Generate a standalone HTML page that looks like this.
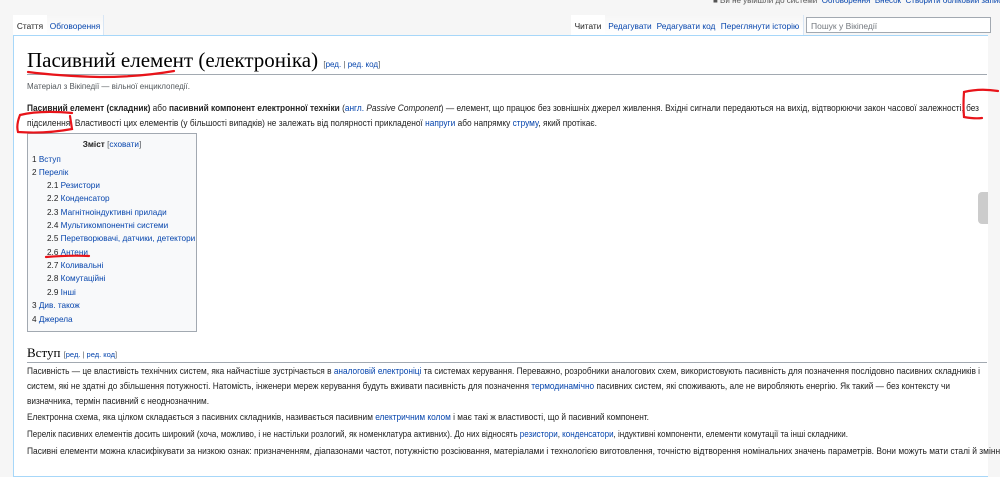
<!DOCTYPE html>
<html><head><meta charset="utf-8"><style>
body{margin:0;width:1000px;height:461px;overflow:hidden;background:#f6f6f6;font-family:"Liberation Sans",sans-serif;position:relative}
a{color:#0645ad;text-decoration:none}
.abs{position:absolute;white-space:nowrap}
#content{position:absolute;left:13px;top:35px;width:974px;height:440px;background:#fff;border:1px solid #a7d7f9;border-right:none}
.tab{position:absolute;top:15px;height:20px;font-size:8.3px;line-height:22px;text-align:center;background:linear-gradient(#f6f6f6,#fff);border-right:1px solid #d8e6f5;overflow:hidden}
.toc{position:absolute;left:27px;top:133px;width:168px;height:197px;border:1px solid #a2a9b1;background:#f8f9fa;font-size:8.2px}
.toc div{position:absolute;white-space:nowrap;color:#222}
svg text{font-family:"Liberation Sans",sans-serif;font-size:9px;fill:#222}
.l{fill:#0645ad}
</style></head><body>
<div class="abs" style="left:713px;top:-4px;font-size:8px;color:#0645ad"><span style="color:#555">&#9632; Ви не увійшли до системи</span> &nbsp;Обговорення &nbsp;Внесок &nbsp;Створити обліковий запис &nbsp;Ув</div>
<div id="content"></div>
<div class="tab" style="left:13px;width:34px;background:#fff;color:#222">Стаття</div>
<div class="tab" style="left:47px;width:56px;color:#0645ad">Обговорення</div>
<div class="tab" style="left:571px;width:34px;background:#fff;color:#222">Читати</div>
<div class="tab" style="left:605px;width:50px;color:#0645ad">Редагувати</div>
<div class="tab" style="left:655px;width:62px;color:#0645ad">Редагувати код</div>
<div class="tab" style="left:717px;width:86px;color:#0645ad">Переглянути історію</div>
<div class="abs" style="left:806px;top:17px;width:185px;height:16px;border:1px solid #a2a9b1;background:#fff;font-size:8.5px;line-height:16px;color:#72777d;padding-left:4px;box-sizing:border-box">Пошук у Вікіпедії</div>
<div class="abs" style="left:27px;top:48px;font-family:'Liberation Serif',serif;font-size:21px;color:#000">Пасивний елемент (електроніка) <span style="font-family:'Liberation Sans';font-size:8px;color:#54595d">[<a>ред.</a> | <a>ред. код</a>]</span></div>
<div class="abs" style="left:27px;top:74px;width:960px;border-top:1px solid #a2a9b1"></div>
<div class="abs" style="left:27px;top:82px;font-size:8px;color:#54595d">Матеріал з Вікіпедії — вільної енциклопедії.</div>
<div class="toc">
<div style="left:0;width:168px;text-align:center;top:6px"><b>Зміст</b> <span style="color:#54595d">[<a>сховати</a>]</span></div>
<div style="left:4px;top:21px">1 <a>Вступ</a></div>
<div style="left:4px;top:34px">2 <a>Перелік</a></div>
<div style="left:19px;top:47px">2.1 <a>Резистори</a></div>
<div style="left:19px;top:60px">2.2 <a>Конденсатор</a></div>
<div style="left:19px;top:74px">2.3 <a>Магнітноіндуктивні прилади</a></div>
<div style="left:19px;top:87px">2.4 <a>Мультикомпонентні системи</a></div>
<div style="left:19px;top:100px">2.5 <a>Перетворювачі, датчики, детектори</a></div>
<div style="left:19px;top:114px">2.6 <a>Антени</a></div>
<div style="left:19px;top:127px">2.7 <a>Коливальні</a></div>
<div style="left:19px;top:140px">2.8 <a>Комутаційні</a></div>
<div style="left:19px;top:154px">2.9 <a>Інші</a></div>
<div style="left:4px;top:167px">3 <a>Див. також</a></div>
<div style="left:4px;top:181px">4 <a>Джерела</a></div>
</div>
<div class="abs" style="left:27px;top:345px;font-family:'Liberation Serif',serif;font-size:13px;color:#000">Вступ <span style="font-family:'Liberation Sans';font-size:7.5px;color:#54595d">[<a>ред.</a> | <a>ред. код</a>]</span></div>
<div class="abs" style="left:27px;top:362px;width:960px;border-top:1px solid #a2a9b1"></div>
<div class="abs" style="left:978px;top:192px;width:10px;height:32px;background:#ccc;border-radius:4px 0 0 4px"></div>
<svg class="abs" style="left:0;top:0" width="1000" height="461">
<text x="27" y="111" textLength="952" lengthAdjust="spacingAndGlyphs"><tspan font-weight="bold">Пасивний елемент (складник)</tspan> або <tspan font-weight="bold">пасивний компонент електронної техніки</tspan> (<tspan class="l">англ.</tspan> <tspan font-style="italic">Passive Component</tspan>) — елемент, що працює без зовнішніх джерел живлення. Вхідні сигнали передаються на вихід, відтворюючи закон часової залежності, без</text>
<text x="27" y="126" textLength="570" lengthAdjust="spacingAndGlyphs">підсилення. Властивості цих елементів (у більшості випадків) не залежать від полярності прикладеної <tspan class="l">напруги</tspan> або напрямку <tspan class="l">струму</tspan>, який протікає.</text>
<text x="27" y="374" textLength="953" lengthAdjust="spacingAndGlyphs">Пасивність — це властивість технічних систем, яка найчастіше зустрічається в <tspan class="l">аналоговій електроніці</tspan> та системах керування. Переважно, розробники аналогових схем, використовують пасивність для позначення послідовно пасивних складників і</text>
<text x="27" y="389" textLength="923" lengthAdjust="spacingAndGlyphs">систем, які не здатні до збільшення потужності. Натомість, інженери мереж керування будуть вживати пасивність для позначення <tspan class="l">термодинамічно</tspan> пасивних систем, які споживають, але не виробляють енергію. Як такий — без контексту чи</text>
<text x="27" y="404" textLength="182" lengthAdjust="spacingAndGlyphs">визначника, термін пасивний є неоднозначним.</text>
<text x="27" y="420" textLength="622" lengthAdjust="spacingAndGlyphs">Електронна схема, яка цілком складається з пасивних складників, називається пасивним <tspan class="l">електричним колом</tspan> і має такі ж властивості, що й пасивний компонент.</text>
<text x="27" y="437" textLength="821" lengthAdjust="spacingAndGlyphs">Перелік пасивних елементів досить широкий (хоча, можливо, і не настільки розлогий, як номенклатура активних). До них відносять <tspan class="l">резистори</tspan>, <tspan class="l">конденсатори</tspan>, індуктивні компоненти, елементи комутації та інші складники.</text>
<text x="27" y="454" textLength="975" lengthAdjust="spacingAndGlyphs">Пасивні елементи можна класифікувати за низкою ознак: призначенням, діапазонами частот, потужністю розсіювання, матеріалами і технологією виготовлення, точністю відтворення номінальних значень параметрів. Вони можуть мати сталі й змінні</text>
<g fill="none" stroke="#e8141a" stroke-width="2.2" stroke-linecap="round">
<path d="M28 72 Q60 76 100 77 Q140 77 174 71"/>
<path d="M72 113 Q40 110 20 115 Q16 125 18 132 Q45 134 72 129 L70 116"/>
<path d="M998 91 Q980 88 964 92 Q963 105 964 117 Q975 119 982 118"/>
<path d="M46 257 Q70 255 89 256"/>
</g></svg>
</body></html>
